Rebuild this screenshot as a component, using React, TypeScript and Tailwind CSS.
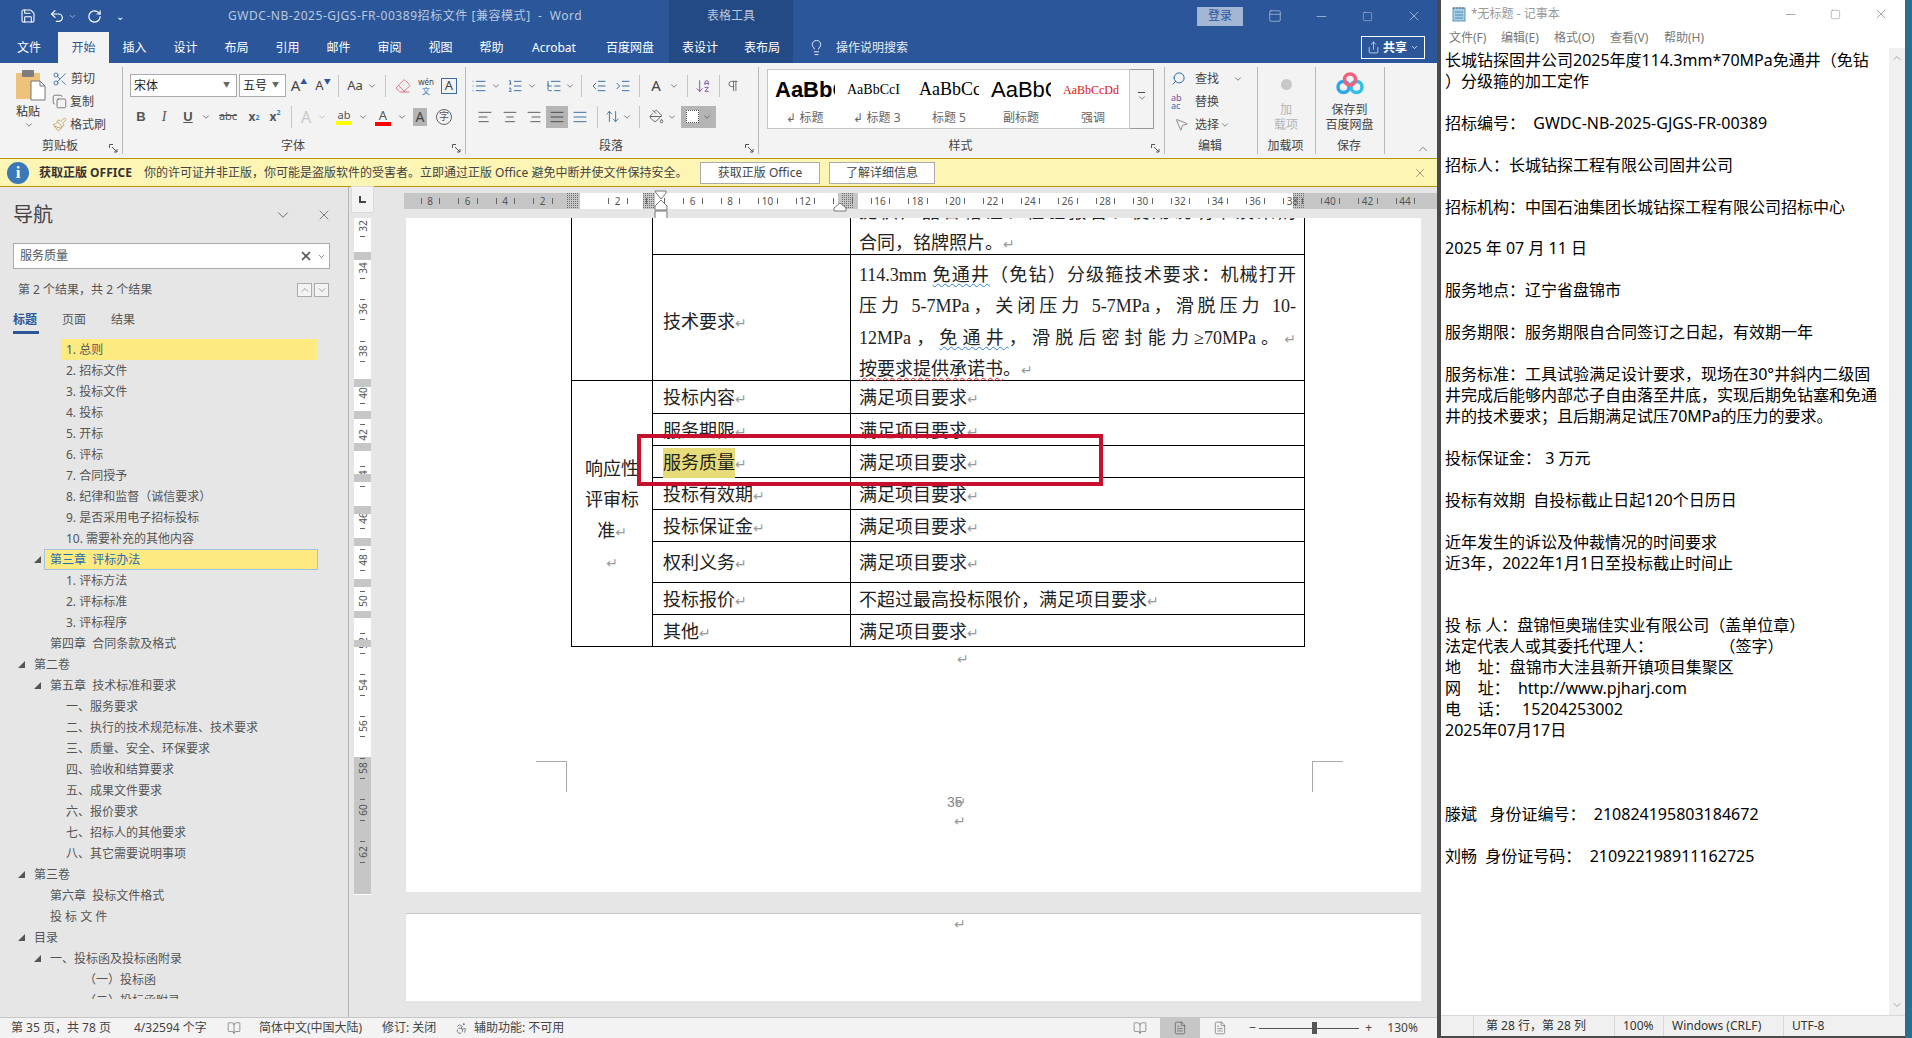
import { ReactNode } from 'react'
import {
  Accessibility,
  AlignCenter,
  AlignJustify,
  AlignLeft,
  AlignRight,
  ArrowDownAZ,
  ChevronDown,
  ChevronUp,
  Copy,
  Eraser,
  IndentDecrease,
  IndentIncrease,
  Lightbulb,
  List,
  ListOrdered,
  ListTree,
  Minus,
  MousePointer2,
  PaintBucket,
  Paintbrush,
  Pilcrow,
  RotateCw,
  Save,
  Scissors,
  Search,
  Share,
  Square,
  Undo2,
  X,
  ArrowUpDown,
  BookOpen,
  FileText,
  PanelTop,
} from 'lucide-react'

const Chev = ({ size = 10 }: { size?: number }) => <ChevronDown size={size} strokeWidth={1.6} className="text-[#444]" />

const Slot = ({ c, children }: { c: string; children?: ReactNode }) => (
  <div className={`flex shrink-0 items-center justify-center ${c}`}>{children}</div>
)

const Divider = () => <div className="h-[22px] w-px bg-[#c6c6c6]" />

const Launcher = () => (
  <svg width="9" height="9" viewBox="0 0 9 9" className="absolute right-[4px] bottom-[1px] text-[#555]" fill="none" stroke="currentColor">
    <path d="M0.5 4V0.5H4M3 3L8 8M8 5V8H5" />
  </svg>
)

const Mark = () => <span className="font-['DejaVu_Sans',sans-serif] text-[14px] leading-none text-[#9a9a9a]">↵</span>

const Group = ({ c, label, launcher, children }: { c: string; label: string; launcher?: boolean; children: ReactNode }) => (
  <div className={`relative flex h-[87px] shrink-0 flex-col border-r border-[#b8b8b8] ${c}`}>
    <div className="min-h-0 flex-1">{children}</div>
    <div className="pr-[2px] text-center text-[12px] leading-[16px] text-[#444]">{label}</div>
    {launcher && <Launcher />}
  </div>
)

const tabs = [
  ['文件', 'w-[58px]'],
  ['开始', 'w-[51px] bg-[#f3f3f3] text-[#2b579a]'],
  ['插入', 'w-[51px]'],
  ['设计', 'w-[51px]'],
  ['布局', 'w-[51px]'],
  ['引用', 'w-[51px]'],
  ['邮件', 'w-[51px]'],
  ['审阅', 'w-[51px]'],
  ['视图', 'w-[51px]'],
  ['帮助', 'w-[51px]'],
  ['Acrobat', 'w-[74px]'],
  ['百度网盘', 'w-[78px]'],
  ['表设计', 'w-[62px] bg-[#234a84]'],
  ['表布局', 'w-[62px] bg-[#234a84]'],
]

function TitleBar() {
  return (
    <div className="flex h-[32px] shrink-0 items-center bg-[#2b579a] text-[12px]">
      <div className="flex w-[228px] items-center pl-[20px] text-white">
        <Save size={16} strokeWidth={1.6} />
        <Undo2 size={16} strokeWidth={1.8} className="ml-[13px]" />
        <ChevronDown size={9} className="ml-[3px] text-[#b9c8e0]" />
        <RotateCw size={15} strokeWidth={1.8} className="ml-[10px]" />
        <div className="ml-[14px] text-[10px] leading-none">⌄</div>
      </div>
      <div className="w-[441px] whitespace-pre tracking-[0.55px] text-[#b9c7de]">GWDC-NB-2025-GJGS-FR-00389招标文件 [兼容模式]  -  Word</div>
      <div className="flex h-full w-[124px] items-center justify-center bg-[#234a84] text-[#b9c7de]">表格工具</div>
      <div className="ml-[404px] flex h-[19px] w-[46px] items-center justify-center bg-[#a3b6d3] text-[#2b579a]">登录</div>
      <PanelTop size={14} strokeWidth={1} className="ml-[25px] text-[#d5deec]" />
      <Minus size={15} strokeWidth={1} className="ml-[32px] text-[#d5deec]" />
      <Square size={11} strokeWidth={1} className="ml-[33px] text-[#d5deec]" />
      <X size={16} strokeWidth={1} className="ml-[33px] text-[#d5deec]" />
    </div>
  )
}

function TabRow() {
  return (
    <div className="flex h-[31px] shrink-0 items-stretch bg-[#2b579a] text-[12px] text-white">
      {tabs.map(([t, c]) => (
        <div key={t} className={`flex items-center justify-center ${c}`}>
          {t}
        </div>
      ))}
      <Lightbulb size={17} strokeWidth={1.2} className="ml-[15px] self-center" />
      <div className="ml-[11px] self-center text-[#e6ecf5]">操作说明搜索</div>
      <div className="ml-[453px] flex h-[23px] w-[64px] items-center justify-center gap-[3px] self-center border border-white font-bold">
        <Share size={13} strokeWidth={1.2} />
        共享
        <ChevronDown size={9} />
      </div>
    </div>
  )
}

function PasteIcon() {
  return (
    <svg width="30" height="31" viewBox="0 0 30 31" className="ml-[16px] mt-[3px]">
      <rect x="0" y="3" width="24" height="26" rx="1" fill="#eec27a" />
      <rect x="6" y="0" width="12" height="7" rx="1" fill="#7d7d7d" />
      <path d="M15 11h9l5 5v14H15z" fill="#fff" stroke="#777" />
      <path d="M24 11v5h5" fill="none" stroke="#777" />
    </svg>
  )
}

function BaiduLogo() {
  return (
    <svg width="28" height="28" viewBox="0 0 28 28" fill="none">
      <circle cx="7.5" cy="17" r="5.5" stroke="#2fa6ea" strokeWidth="3.5" />
      <circle cx="20.5" cy="17" r="5.5" stroke="#2fc0e8" strokeWidth="3.5" />
      <circle cx="14" cy="9.5" r="5.5" stroke="#f0627c" strokeWidth="3.5" />
    </svg>
  )
}

const styles = [
  { text: 'AaBbCc', label: '↲ 标题', c: "font-['Liberation_Sans',sans-serif] text-[22px] font-bold text-black" },
  { text: 'AaBbCcI', label: '↲ 标题 3', c: "font-['Liberation_Serif',serif] text-[14px] text-black" },
  { text: 'AaBbCcD', label: '标题 5', c: "font-['Liberation_Serif',serif] text-[18px] text-black" },
  { text: 'AaBbCc', label: '副标题', c: "font-['Liberation_Sans',sans-serif] text-[22px] text-black" },
  { text: 'AaBbCcDd', label: '强调', c: "font-['Liberation_Serif',serif] text-[12px] text-[#e01010]" },
]

function Ribbon() {
  const ic = 'text-[#555]'
  return (
    <div className="flex h-[95px] shrink-0 bg-[#f3f3f3] pt-[4px] text-[12px] text-[#444]">
      <Group c="w-[123px]" label="剪贴板" launcher>
        <div className="flex">
          <div className="flex w-[52px] flex-col">
            <PasteIcon />
            <div className="mt-[3px] pl-[16px] leading-[16px] text-[#333]">粘贴</div>
            <div className="pl-[24px]">
              <Chev />
            </div>
          </div>
          <div className="flex flex-col">
            <div className="flex h-[23px] items-center gap-[3px]">
              <Scissors size={16} strokeWidth={1.3} className="text-[#3b6ea8]" />
              剪切
            </div>
            <div className="flex h-[23px] items-center gap-[3px]">
              <Copy size={15} strokeWidth={1.2} className={ic} />
              复制
            </div>
            <div className="flex h-[23px] items-center gap-[3px]">
              <Paintbrush size={15} strokeWidth={1.5} className="text-[#c9a25a]" />
              格式刷
            </div>
          </div>
        </div>
      </Group>

      <Group c="w-[343px]" label="字体" launcher>
        <div className="flex h-[23px] items-center pl-[7px] mt-[7px]">
          <div className="flex h-[23px] w-[107px] items-center justify-between border border-[#ababab] bg-white px-[3px] text-[#222]">
            宋体
            <div className="mr-[3px] text-[7px] text-[#666]">▼</div>
          </div>
          <div className="ml-[2px] flex h-[23px] w-[47px] items-center justify-between border border-[#ababab] bg-white px-[3px] text-[#222]">
            五号
            <div className="mr-[3px] text-[7px] text-[#666]">▼</div>
          </div>
          <Slot c="w-[24px] ml-[1px] text-[15px]">
            A<sup className="text-[7px] text-[#2b579a]">▲</sup>
          </Slot>
          <Slot c="w-[24px] text-[13px]">
            A<sup className="text-[7px] text-[#2b579a]">▼</sup>
          </Slot>
          <Slot c="w-[6px]">
            <Divider />
          </Slot>
          <Slot c="w-[22px] ml-[3px] text-[13px]">Aa</Slot>
          <Slot c="w-[12px]">
            <Chev />
          </Slot>
          <Slot c="w-[14px]">
            <Divider />
          </Slot>
          <Slot c="w-[22px]">
            <Eraser size={16} strokeWidth={1.3} className="text-[#e0607a]" />
          </Slot>
          <Slot c="w-[24px]">
            <div className="flex flex-col items-center text-[8px] leading-[9px]">
              wén
              <span className="text-[#2b79c2]">文</span>
            </div>
          </Slot>
          <Slot c="w-[22px]">
            <div className="flex h-[16px] w-[16px] items-center justify-center border border-[#3b6ea8] text-[13px]">A</div>
          </Slot>
        </div>
        <div className="mt-[8px] flex h-[23px] items-center pl-[7px] text-[#555]">
          <Slot c="w-[22px] font-['Liberation_Sans'] text-[13px] font-bold">B</Slot>
          <Slot c="w-[24px] font-['Liberation_Serif'] text-[14px] italic">I</Slot>
          <Slot c="w-[24px] font-['Liberation_Sans'] text-[13px] font-bold underline">U</Slot>
          <Slot c="w-[12px]">
            <Chev />
          </Slot>
          <Slot c="w-[32px] text-[11px] line-through">abc</Slot>
          <Slot c="w-[20px] text-[12px] font-bold">
            x<sub className="text-[7px] text-[#2b79c2]">2</sub>
          </Slot>
          <Slot c="w-[22px] text-[12px] font-bold">
            x<sup className="text-[7px] text-[#2b79c2]">2</sup>
          </Slot>
          <Slot c="w-[10px]">
            <Divider />
          </Slot>
          <Slot c="w-[20px] text-[16px] text-[#c9c9c9]">A</Slot>
          <Slot c="w-[12px]">
            <ChevronDown size={10} className="text-[#bbb]" />
          </Slot>
          <Slot c="w-[28px] ml-[2px]">
            <div className="flex flex-col items-center text-[11px] leading-[13px]">
              ab
              <div className="h-[4px] w-[16px] bg-[#ffff00]" />
            </div>
          </Slot>
          <Slot c="w-[10px]">
            <Chev />
          </Slot>
          <Slot c="w-[26px] ml-[2px]">
            <div className="flex flex-col items-center text-[13px] leading-[14px]">
              A
              <div className="h-[4px] w-[16px] bg-[#ff0000]" />
            </div>
          </Slot>
          <Slot c="w-[12px]">
            <Chev />
          </Slot>
          <Slot c="w-[20px] ml-[2px]">
            <div className="flex h-[18px] w-[14px] items-center justify-center bg-[#b5b5b5] text-[14px] text-[#444]">A</div>
          </Slot>
          <Slot c="w-[28px]">
            <div className="flex h-[16px] w-[16px] items-center justify-center rounded-full border border-[#666] text-[10px]">字</div>
          </Slot>
        </div>
      </Group>

      <Group c="w-[293px]" label="段落" launcher>
        <div className="mt-[7px] flex h-[23px] items-center pl-[2px]">
          <Slot c="w-[22px]"><List size={16} strokeWidth={1.4} className="text-[#2f659f]" /></Slot>
          <Slot c="w-[12px]"><Chev /></Slot>
          <Slot c="w-[22px] ml-[2px]"><ListOrdered size={16} strokeWidth={1.4} className="text-[#2f659f]" /></Slot>
          <Slot c="w-[12px]"><Chev /></Slot>
          <Slot c="w-[22px] ml-[5px]"><ListTree size={16} strokeWidth={1.4} className="text-[#2f659f]" /></Slot>
          <Slot c="w-[10px]"><Chev /></Slot>
          <Slot c="w-[12px]"><Divider /></Slot>
          <Slot c="w-[24px]"><IndentDecrease size={16} strokeWidth={1.4} className="text-[#2f659f]" /></Slot>
          <Slot c="w-[24px]"><IndentIncrease size={16} strokeWidth={1.4} className="text-[#2f659f]" /></Slot>
          <Slot c="w-[8px]"><Divider /></Slot>
          <Slot c="w-[26px] text-[15px]">A</Slot>
          <Slot c="w-[10px]"><Chev /></Slot>
          <Slot c="w-[8px] ml-[4px]"><Divider /></Slot>
          <Slot c="w-[24px]"><ArrowDownAZ size={16} strokeWidth={1.4} className="text-[#7a4fa3]" /></Slot>
          <Slot c="w-[8px]"><Divider /></Slot>
          <Slot c="w-[20px]"><Pilcrow size={14} strokeWidth={1.4} className={ic} /></Slot>
        </div>
        <div className="mt-[8px] flex h-[23px] items-center pl-[7px]">
          <Slot c="w-[24px]"><AlignLeft size={16} strokeWidth={1.4} className={ic} /></Slot>
          <Slot c="w-[25px]"><AlignCenter size={16} strokeWidth={1.4} className={ic} /></Slot>
          <Slot c="w-[24px]"><AlignRight size={16} strokeWidth={1.4} className={ic} /></Slot>
          <Slot c="w-[22px] h-[22px] bg-[#b5b5b5]"><AlignJustify size={16} strokeWidth={1.4} className="text-[#444]" /></Slot>
          <Slot c="w-[24px]"><AlignJustify size={16} strokeWidth={1.4} className="text-[#2f659f]" /></Slot>
          <Slot c="w-[10px]"><Divider /></Slot>
          <Slot c="w-[20px]"><ArrowUpDown size={15} strokeWidth={1.4} className="text-[#2f659f]" /></Slot>
          <Slot c="w-[10px]"><Chev /></Slot>
          <Slot c="w-[14px]"><Divider /></Slot>
          <Slot c="w-[20px]"><PaintBucket size={15} strokeWidth={1.4} className={ic} /></Slot>
          <Slot c="w-[12px]"><Chev /></Slot>
          <Slot c="w-[35px] h-[22px] ml-[3px] gap-[3px] bg-[#b5b5b5]">
            <div className="h-[13px] w-[13px] border border-dotted border-[#555] bg-white" />
            <Chev />
          </Slot>
        </div>
      </Group>

      <Group c="w-[406px]" label="样式" launcher>
        <div className="ml-[8px] mt-[2px] flex h-[60px] w-[387px]">
          <div className="flex h-full w-[363px] items-stretch border border-[#c6c6c6] bg-white pl-[1px]">
            {styles.map((s) => (
              <div key={s.label} className="flex w-[72px] flex-col items-center overflow-hidden">
                <div className={`flex h-[39px] w-[60px] items-center justify-start overflow-hidden whitespace-nowrap ${s.c}`}>{s.text}</div>
                <div className="text-[#666]">{s.label}</div>
              </div>
            ))}
          </div>
          <div className="flex h-full w-[24px] flex-col items-center border border-l-0 border-[#9a9a9a] pt-[22px]">
            <div className="h-px w-[7px] bg-[#444]" />
            <Chev />
          </div>
        </div>
      </Group>

      <Group c="w-[93px]" label="编辑">
        <div className="flex h-[23px] items-center pl-[6px]">
          <Search size={15} strokeWidth={1.6} className="-scale-x-100 text-[#2b6cb0]" />
          <div className="ml-[9px]">查找</div>
          <div className="ml-[14px]"><Chev /></div>
        </div>
        <div className="flex h-[23px] items-center pl-[6px]">
          <div className="w-[17px] text-[9px] leading-[8px] text-[#7a4fa3]">ab<br /><span className="text-[#2b6cb0]">ac</span></div>
          <div className="ml-[7px]">替换</div>
        </div>
        <div className="flex h-[23px] items-center pl-[9px]">
          <MousePointer2 size={15} strokeWidth={1} className={ic} />
          <div className="ml-[6px]">选择</div>
          <div className="ml-[1px]"><Chev /></div>
        </div>
      </Group>

      <Group c="w-[58px]" label="加载项">
        <div className="flex flex-col items-center pr-[1px] text-[#b5b5b5]">
          <div className="mt-[12px] h-[11px] w-[11px] rounded-full bg-[#c8c8c8]" />
          <div className="mt-[12px] leading-[15px]">加</div>
          <div className="leading-[15px]">载项</div>
        </div>
      </Group>

      <Group c="w-[69px]" label="保存">
        <div className="flex flex-col items-center pr-[1px] text-[#444]">
          <div className="mt-[3px]"><BaiduLogo /></div>
          <div className="mt-[4px] leading-[15px]">保存到</div>
          <div className="leading-[15px]">百度网盘</div>
        </div>
      </Group>

      <div className="flex flex-1 items-end justify-end pb-[2px] pr-[7px]">
        <ChevronUp size={14} strokeWidth={1.2} className={ic} />
      </div>
    </div>
  )
}

function Notice() {
  const btn = 'flex h-[22px] items-center justify-center border border-[#ababab] bg-white text-[#444]'
  return (
    <div className="flex h-[29px] shrink-0 items-center border-y border-[#b8960c] bg-[#fdf5b4] text-[12px] text-[#444]">
      <div className="ml-[7px] flex h-[22px] w-[22px] items-center justify-center rounded-full bg-[#3a79b8] font-['Liberation_Serif',serif] text-[17px] font-bold text-white">i</div>
      <div className="ml-[10px] w-[105px] font-bold text-[#333]">获取正版 OFFICE</div>
      <div className="w-[556px]">你的许可证并非正版，你可能是盗版软件的受害者。立即通过正版 Office 避免中断并使文件保持安全。</div>
      <div className={`${btn} w-[120px]`}>获取正版 Office</div>
      <div className={`${btn} ml-[9px] w-[106px]`}>了解详细信息</div>
      <X size={14} strokeWidth={1} className="ml-[478px] text-[#555]" />
    </div>
  )
}

type NavItem = [number, string, boolean?, boolean?]

const navItems: NavItem[] = [
  [3, '1. 总则', false, true],
  [3, '2. 招标文件'],
  [3, '3. 投标文件'],
  [3, '4. 投标'],
  [3, '5. 开标'],
  [3, '6. 评标'],
  [3, '7. 合同授予'],
  [3, '8. 纪律和监督（诚信要求）'],
  [3, '9. 是否采用电子招标投标'],
  [3, '10. 需要补充的其他内容'],
  [2, '第三章  评标办法', true, true],
  [3, '1. 评标方法'],
  [3, '2. 评标标准'],
  [3, '3. 评标程序'],
  [2, '第四章  合同条款及格式'],
  [1, '第二卷', true],
  [2, '第五章  技术标准和要求', true],
  [3, '一、服务要求'],
  [3, '二、执行的技术规范标准、技术要求'],
  [3, '三、质量、安全、环保要求'],
  [3, '四、验收和结算要求'],
  [3, '五、成果文件要求'],
  [3, '六、报价要求'],
  [3, '七、招标人的其他要求'],
  [3, '八、其它需要说明事项'],
  [1, '第三卷', true],
  [2, '第六章  投标文件格式'],
  [2, '投 标 文 件'],
  [1, '目录', true],
  [2, '一、投标函及投标函附录', true],
  [4, '（一）投标函'],
  [4, '（二）投标函附录'],
]

const navIndent: Record<number, string> = { 1: 'pl-[34px]', 2: 'pl-[50px]', 3: 'pl-[66px]', 4: 'pl-[84px]' }
const navArrow: Record<number, string> = { 1: 'left-[18px]', 2: 'left-[34px]' }

function NavPane() {
  return (
    <div className="flex h-full w-[349px] shrink-0 flex-col border-r border-[#b5b5b5] bg-[#e6e6e6] text-[12px] text-[#555]">
      <div className="flex h-[56px] shrink-0 items-center pl-[13px] pr-[16px]">
        <div className="text-[20px] leading-[34px] text-[#444]">导航</div>
        <ChevronDown size={18} strokeWidth={1} className="ml-auto text-[#444]" />
        <X size={16} strokeWidth={1} className="ml-[24px] text-[#444]" />
      </div>
      <div className="ml-[13px] flex h-[26px] w-[317px] shrink-0 items-center border border-[#ababab] bg-white pl-[6px] pr-[3px]">
        服务质量
        <X size={14} strokeWidth={3} className="ml-auto text-[#555]" />
        <ChevronDown size={9} className="ml-[4px]" />
      </div>
      <div className="flex h-[41px] shrink-0 items-center pl-[18px] pr-[19px]">
        第 2 个结果，共 2 个结果
        <div className="ml-auto flex h-[14px] w-[15px] items-center justify-center border border-[#ababab] bg-[#f3f3f3]">
          <ChevronUp size={12} strokeWidth={1} />
        </div>
        <div className="ml-[2px] flex h-[14px] w-[15px] items-center justify-center border border-[#ababab] bg-[#f3f3f3]">
          <ChevronDown size={12} strokeWidth={1} />
        </div>
      </div>
      <div className="flex h-[19px] shrink-0 items-center pl-[13px]">
        <div className="w-[49px] font-bold text-[#2b579a]">标题</div>
        <div className="w-[49px]">页面</div>
        <div>结果</div>
      </div>
      <div className="ml-[13px] mt-[2px] h-[3px] w-[26px] shrink-0 bg-[#2b579a]" />
      <div className="mt-[5px] min-h-0 flex-1">
        <div className="h-[660px] overflow-hidden">
          {navItems.map(([lvl, text, arrow, hl], i) => (
            <div key={i} className={`relative flex h-[21px] items-center whitespace-pre ${navIndent[lvl]}`}>
              {arrow && <div className={`absolute top-[7px] h-0 w-0 border-b-[7px] border-l-[7px] border-b-[#555] border-l-transparent ${navArrow[lvl]}`} />}
              {hl && lvl === 3 && <div className="absolute inset-y-0 left-[61px] w-[256px] bg-[#fdea80]" />}
              {hl && lvl === 2 && <div className="absolute inset-y-0 left-[44px] w-[274px] border border-[#a8c0e0] bg-[#fdea80]" />}
              <span className={`relative ${hl && lvl === 2 ? 'text-[#2b6cb0]' : ''}`}>{text}</span>
            </div>
          ))}
        </div>
      </div>
    </div>
  )
}

const topNums = [2, 4, 6, 8, 10, 12, 14, 16, 18, 20, 22, 24, 26, 28, 30, 32, 34, 36, 38, 40, 42, 44]

// dotted margin handle on the ruler
const Hatch = ({ c }: { c: string }) => (
  <svg width="12" height="16" className={`absolute top-0 ${c}`}>
    <defs>
      <pattern id="hatch" width="2" height="2" patternUnits="userSpaceOnUse">
        <rect width="1" height="1" fill="#6e6e6e" />
      </pattern>
    </defs>
    <rect width="12" height="16" fill="url(#hatch)" />
  </svg>
)

function HRuler() {
  const ticks: number[] = []
  const labels: [number, number][] = []
  ;[-8, -6, -4, -2, ...topNums].forEach((n) => {
    const x = 176 + (n / 2) * 37.5
    ticks.push(x - 9.4, x + 9.4)
    if (n !== 4 && n !== 14) labels.push([Math.abs(n), x])
  })
  return (
    <div className="relative flex h-[31px] shrink-0 items-start">
      <div className="ml-[3px] flex h-[25px] w-[21px] items-center justify-center bg-[#f3f3f3] shadow-[0_0_0_1px_#dadada]">
        <div className="h-[7px] w-[7px] border-b-2 border-l-2 border-[#444]" />
      </div>
      <div className="relative ml-[31px] mt-[6px] flex h-[16px] w-[1033px] overflow-hidden text-[10px] text-[#555]">
        <div className="w-[176px] bg-[#c6c6c6]" />
        <div className="w-[63px] bg-white" />
        <div className="w-[12px] bg-[#c6c6c6]" />
        <div className="w-[183px] bg-white" />
        <div className="w-[20px] bg-[#c6c6c6]" />
        <div className="w-[435px] bg-white" />
        <div className="flex-1 bg-[#c6c6c6]" />
        {ticks.map((t, i) => (
          <div key={i} className="absolute top-[5px] h-[6px] w-px bg-[#666]" style={{ left: t }} />
        ))}
        {labels.map(([n, x]) => (
          <div key={x} className="absolute top-0 w-[16px] text-center leading-[16px]" style={{ left: x - 8 }}>
            {n}
          </div>
        ))}
        <Hatch c="left-[163px]" />
        <Hatch c="left-[239px]" />
        <Hatch c="left-[438px]" />
        <Hatch c="left-[889px]" />
      </div>
      <svg width="14" height="31" viewBox="0 0 14 31" className="absolute left-[305px] top-[3px]" fill="#fff" stroke="#777">
        <path d="M1 1h11v2l-5 6-5-6zM7 10l6 6v4H1v-4zM1 21h12v8H1z" />
      </svg>
      <svg width="14" height="10" viewBox="0 0 14 10" className="absolute left-[484px] top-[15px]" fill="#fff" stroke="#777">
        <path d="M7 1l6 5v3H1V6z" />
      </svg>
    </div>
  )
}

const vBands: [string, string][] = [
  ['h-[34px]', ''],
  ['h-[8px]', 'b'],
  ['h-[119px]', ''],
  ['h-[8px]', 'b'],
  ['h-[24px]', ''],
  ['h-[8px]', 'b'],
  ['h-[24px]', ''],
  ['h-[8px]', 'b'],
  ['h-[23px]', ''],
  ['h-[8px]', 'b'],
  ['h-[24px]', ''],
  ['h-[8px]', 'b'],
  ['h-[24px]', ''],
  ['h-[8px]', 'b'],
  ['h-[33px]', ''],
  ['h-[8px]', 'b'],
  ['h-[24px]', ''],
  ['h-[7px]', 'b'],
  ['h-[22px]', ''],
  ['h-[7px]', 'b'],
  ['h-[110px]', ''],
  ['h-[137px]', 'g'],
]

function VRuler() {
  const nums = Array.from({ length: 16 }, (_, i) => 32 + i * 2)
  return (
    <div className="relative ml-[5px] w-[17px] overflow-hidden bg-white text-[10px] text-[#555]">
      {vBands.map(([h, kind], i) => (
        <div key={i} className={`${h} ${kind === 'b' ? 'relative z-10 bg-[#c6c6c6]' : kind === 'g' ? 'bg-[#c6c6c6]' : ''}`} />
      ))}
      {nums.map((n, i) => {
        const y = 8 + i * 41.7
        return (
          <div key={n}>
            <div className="absolute left-0 w-[17px] -rotate-90 text-center leading-[12px]" style={{ top: y - 6 }}>
              {n}
            </div>
            <div className="absolute left-[6px] h-px w-[5px] bg-[#666]" style={{ top: y - 10.5 }} />
            <div className="absolute left-[6px] h-px w-[5px] bg-[#666]" style={{ top: y + 10 }} />
          </div>
        )
      })}
    </div>
  )
}

const reqRows: [string, string, string][] = [
  ['投标内容', '满足项目要求', 'h-[33px]'],
  ['服务期限', '满足项目要求', 'h-[32px]'],
  ['服务质量', '满足项目要求', 'h-[32px]'],
  ['投标有效期', '满足项目要求', 'h-[32px]'],
  ['投标保证金', '满足项目要求', 'h-[32px]'],
  ['权利义务', '满足项目要求', 'h-[41px]'],
  ['投标报价', '不超过最高投标限价，满足项目要求', 'h-[32px]'],
  ['其他', '满足项目要求', 'h-[32px]'],
]

const wavy = 'underline decoration-wavy decoration-1 underline-offset-2'

function DocTable() {
  const cell = 'border border-black p-0 pl-[10px] align-middle'
  const cell3 = 'border border-black p-0 pl-[8px] align-middle'
  const line = '[text-align-last:justify] leading-[31.5px]'
  return (
    <table className="ml-[165px] w-[733px] table-fixed border-collapse text-[18px] leading-[28px] text-[#222]">
      <colgroup>
        <col className="w-[81px]" />
        <col className="w-[198px]" />
        <col className="w-[454px]" />
      </colgroup>
      <tbody>
        <tr className="h-[36px]">
          <td rowSpan={2} className="border-x border-black" />
          <td className={`${cell} border-t-0`} />
          <td className={`${cell3} border-t-0 pr-[8px]`}>
            <div className="h-[35px] overflow-hidden">
              <div className="-mt-[21px] h-[31px] leading-[31px] [text-align-last:justify]">提供产品合格证、检验报告、使用说明书及采购</div>
              <div className="h-[31px] leading-[31px]">
                合同，铭牌照片。
                <Mark />
              </div>
            </div>
          </td>
        </tr>
        <tr className="h-[126px]">
          <td className={`${cell} pt-[9px]`}>
            技术要求
            <Mark />
          </td>
          <td className="border border-black p-0 pl-[8px] pr-[8px] pt-[5px] align-top">
            <div className={line}>
              114.3mm <span className={`${wavy} decoration-[#2f80d8]`}>免通井</span>（免钻）分级箍技术要求：机械打开
            </div>
            <div className={line}>压力 5-7MPa，关闭压力 5-7MPa，滑脱压力 10-</div>
            <div className={line}>
              12MPa，<span className={`${wavy} decoration-[#2f80d8]`}>免通井</span>，滑脱后密封能力≥70MPa。
              <Mark />
            </div>
            <div className="h-[25px] leading-[31.5px]">
              <span className={`${wavy} decoration-[#e02020]`}>按要求提供承诺书</span>。
              <Mark />
            </div>
          </td>
        </tr>
        {reqRows.map(([a, b, h], i) => (
          <tr key={a} className={h}>
            {i === 0 && (
              <td rowSpan={8} className="border border-black p-0 pt-[6px] text-center align-middle leading-[31px]">
                响应性
                <br />
                评审标
                <br />
                准<Mark />
                <br />
                <Mark />
              </td>
            )}
            <td className={`${cell} pt-[3px]`}>
              {a === '服务质量' ? <span className="bg-[#e8dc78] py-[5px]">{a}</span> : a}
              <Mark />
            </td>
            <td className={`${cell3} pt-[3px]`}>
              {b}
              <Mark />
            </td>
          </tr>
        ))}
      </tbody>
    </table>
  )
}

function DocArea() {
  return (
    <div className="flex min-w-0 flex-1 flex-col">
      <HRuler />
      <div className="flex min-h-0 flex-1">
        <div className="flex h-[677px] w-[57px] shrink-0">
          <VRuler />
        </div>
        <div className="w-[1015px] shrink-0 font-['Liberation_Serif','Noto_Sans_CJK_SC',serif]">
          <div className="relative h-[674px] overflow-hidden bg-white">
            <DocTable />
            <div className="flex h-[24px] items-center pl-[551px]">
              <Mark />
            </div>
            <div className="mt-[90px] flex h-[30px]">
              <div className="ml-[130px] h-[31px] w-[31px] border-r border-t border-[#aaa]" />
              <div className="ml-[745px] h-[31px] w-[31px] border-l border-t border-[#aaa]" />
            </div>
            <div className="mt-[2px] flex h-[18px] items-center pl-[541px] font-['Liberation_Sans',sans-serif] text-[14px] leading-[18px] text-[#888]">
              35
              <span className="-ml-[8px]">
                <Mark />
              </span>
            </div>
            <div className="flex h-[20px] items-center pl-[548px]">
              <Mark />
            </div>
            <div className="absolute left-[231px] top-[216px] h-[52px] w-[466px] border-[4px] border-[#c8102e]" />
          </div>
          <div className="mt-[21px] h-[88px] border-t border-[#c9c9c9] bg-white pl-[548px] pt-[1px] leading-[18px]">
            <Mark />
          </div>
        </div>
      </div>
    </div>
  )
}

function WordStatus() {
  return (
    <div className="flex h-[21px] shrink-0 items-center border-t border-[#c6c6c6] bg-[#f3f3f3] text-[12px] text-[#444]">
      <div className="w-[123px] pl-[11px]">第 35 页，共 78 页</div>
      <div className="w-[104px] pl-[11px]">4/32594 个字</div>
      <BookOpen size={14} strokeWidth={1} className="text-[#555]" />
      <div className="ml-[18px] w-[123px]">简体中文(中国大陆)</div>
      <div className="w-[73px]">修订: 关闭</div>
      <Accessibility size={13} strokeWidth={1.3} className="text-[#555]" />
      <div className="ml-[6px]">辅助功能: 不可用</div>
      <BookOpen size={14} strokeWidth={1} className="ml-[569px] text-[#555]" />
      <div className="ml-[13px] flex h-[20px] w-[40px] items-center justify-center bg-[#c6c6c6]">
        <FileText size={14} strokeWidth={1} className="text-[#444]" />
      </div>
      <FileText size={14} strokeWidth={1} className="ml-[13px] text-[#555]" />
      <div className="ml-[22px] w-[10px]">−</div>
      <div className="relative flex w-[100px] items-center">
        <div className="h-px w-full bg-[#555]" />
        <div className="absolute left-[53px] h-[12px] w-[5px] bg-[#555]" />
      </div>
      <div className="ml-[6px] w-[14px]">+</div>
      <div className="ml-[8px]">130%</div>
    </div>
  )
}

const noteLines = [
  '长城钻探固井公司2025年度114.3mm*70MPa免通井（免钻',
  '）分级箍的加工定作',
  '',
  '招标编号：  GWDC-NB-2025-GJGS-FR-00389',
  '',
  '招标人：长城钻探工程有限公司固井公司',
  '',
  '招标机构：中国石油集团长城钻探工程有限公司招标中心',
  '',
  '2025 年 07 月 11 日',
  '',
  '服务地点：辽宁省盘锦市',
  '',
  '服务期限：服务期限自合同签订之日起，有效期一年',
  '',
  '服务标准：工具试验满足设计要求，现场在30°井斜内二级固',
  '井完成后能够内部芯子自由落至井底，实现后期免钻塞和免通',
  '井的技术要求；且后期满足试压70MPa的压力的要求。',
  '',
  '投标保证金： 3 万元',
  '',
  '投标有效期  自投标截止日起120个日历日',
  '',
  '近年发生的诉讼及仲裁情况的时间要求',
  '近3年，2022年1月1日至投标截止时间止',
  '',
  '',
  '投 标 人：盘锦恒奥瑞佳实业有限公司（盖单位章）',
  '法定代表人或其委托代理人：                （签字）',
  '地    址：盘锦市大洼县新开镇项目集聚区',
  '网    址：  http://www.pjharj.com',
  '电    话：   15204253002',
  '2025年07月17日',
  '',
  '',
  '',
  '滕斌   身份证编号：  210824195803184672',
  '',
  '刘畅  身份证号码：  210922198911162725',
]

function Notepad() {
  return (
    <div className="flex h-[1036px] w-[464px] shrink-0 flex-col bg-white">
      <div className="flex h-[28px] shrink-0 items-center text-[12px] text-[#999]">
        <svg width="15" height="16" viewBox="0 0 15 16" className="ml-[11px] shrink-0">
          <rect x="1" y="2" width="12" height="13" fill="#9fd0ee" stroke="#6a93ad" />
          <path d="M3 6h8M3 9h8M3 12h8" stroke="#5d8aa8" />
          <path d="M2 1v2M5 1v2M8 1v2M11 1v2" stroke="#666" />
        </svg>
        <div className="ml-[4px] w-[312px] shrink-0 whitespace-nowrap">*无标题 - 记事本</div>
        <Minus size={15} strokeWidth={1} className="shrink-0 text-[#777]" />
        <Square size={11} strokeWidth={1} className="ml-[32px] shrink-0 text-[#777]" />
        <X size={16} strokeWidth={1} className="ml-[32px] shrink-0 text-[#777]" />
      </div>
      <div className="flex h-[20px] shrink-0 items-center pl-[8px] text-[12px] text-[#777]">
        <div className="w-[52px]">文件(F)</div>
        <div className="w-[53px]">编辑(E)</div>
        <div className="w-[56px]">格式(O)</div>
        <div className="w-[54px]">查看(V)</div>
        <div>帮助(H)</div>
      </div>
      <div className="flex min-h-0 flex-1">
        <div className="flex-1 overflow-hidden pl-[4px] pt-[2px] text-[16px] leading-[20.95px] text-black">
          {noteLines.map((l, i) => (
            <div key={i} className="h-[20.95px] whitespace-pre">
              {l}
            </div>
          ))}
        </div>
        <div className="flex w-[16px] flex-col items-center justify-between bg-[#f0f0f0] py-[4px] text-[#a6a6a6]">
          <ChevronUp size={12} strokeWidth={2} />
          <ChevronDown size={12} strokeWidth={2} />
        </div>
      </div>
      <div className="flex h-[21px] shrink-0 items-center border-t border-[#d9d9d9] bg-[#f0f0f0] text-[12px] text-[#333]">
        <div className="flex h-full w-[32px]" />
        <div className="flex h-full w-[141px] items-center border-l border-[#d9d9d9] pl-[12px]">第 28 行，第 28 列</div>
        <div className="flex h-full w-[49px] items-center border-l border-[#d9d9d9] pl-[8px]">100%</div>
        <div className="flex h-full w-[120px] items-center border-l border-[#d9d9d9] pl-[8px]">Windows (CRLF)</div>
        <div className="flex h-full flex-1 items-center border-l border-[#d9d9d9] pl-[8px]">UTF-8</div>
      </div>
    </div>
  )
}

export default function App() {
  return (
    <div className="flex h-[1038px] w-[1912px] overflow-hidden bg-[#2c6e8f] font-['Noto_Sans','Noto_Sans_CJK_SC',sans-serif]">
      <div className="flex h-full w-[1437px] shrink-0 flex-col bg-[#e6e6e6]">
        <TitleBar />
        <TabRow />
        <Ribbon />
        <Notice />
        <div className="flex min-h-0 flex-1">
          <NavPane />
          <DocArea />
        </div>
        <WordStatus />
      </div>
      <div className="h-full w-[4px] shrink-0 bg-[#4a4a4a]" />
      <div className="flex h-full flex-col">
        <Notepad />
        <div className="h-[2px] bg-[#4a4a4a]" />
      </div>
    </div>
  )
}
